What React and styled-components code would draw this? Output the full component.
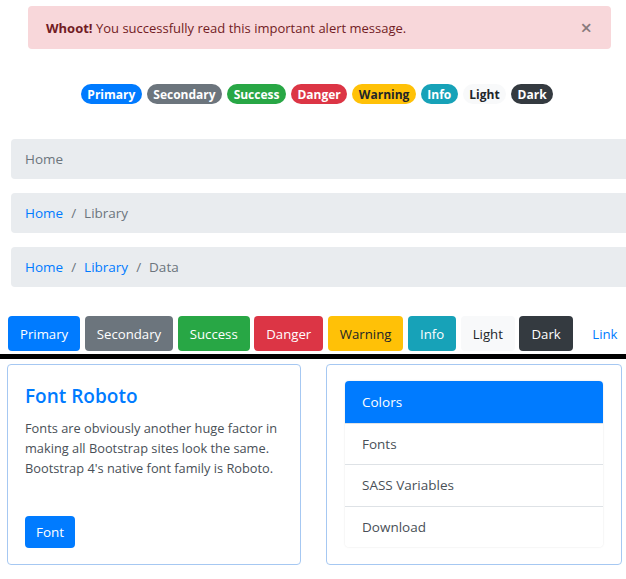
import React from 'react';
import styled, { createGlobalStyle } from 'styled-components';

const GlobalStyle = createGlobalStyle`
  body {
    margin: 0;
    background: #fff;
    font-family: 'Open Sans', 'Noto Sans', sans-serif;
    overflow-x: hidden;
  }
`;

const colors = {
  primary: { bg: '#007bff', fg: '#fff' },
  secondary: { bg: '#6c757d', fg: '#fff' },
  success: { bg: '#28a745', fg: '#fff' },
  danger: { bg: '#dc3545', fg: '#fff' },
  warning: { bg: '#ffc107', fg: '#212529' },
  info: { bg: '#17a2b8', fg: '#fff' },
  light: { bg: '#f8f9fa', fg: '#212529' },
  dark: { bg: '#343a40', fg: '#fff' },
};

const variants = ['primary', 'secondary', 'success', 'danger', 'warning', 'info', 'light', 'dark'];
const label = v => v[0].toUpperCase() + v.slice(1);

const Page = styled.div`
  width: 626px;
  padding-top: 6px;
`;

const Alert = styled.div`
  margin: 0 15px 0 28px;
  height: 43px;
  box-sizing: border-box;
  padding: 0 19px 0 18px;
  display: flex;
  align-items: center;
  justify-content: space-between;
  background: #f8d7da;
  color: #721c24;
  border-radius: 4px;
  font-size: 13px;
  strong {
    font-weight: 700;
  }
`;

const Close = styled.span`
  font-size: 20px;
  font-weight: 600;
  color: #8a7a7c;
  line-height: 1;
`;

const BadgeRow = styled.div`
  margin-top: 35px;
  display: flex;
  justify-content: center;
  gap: 5px;
  padding-left: 8px;
`;

const Badge = styled.span`
  height: 20px;
  padding: 0 6.5px;
  border-radius: 10px;
  display: inline-flex;
  align-items: center;
  font-size: 12px;
  font-weight: 700;
  background: ${p => colors[p.$v].bg};
  color: ${p => colors[p.$v].fg};
`;

const Crumbs = styled.nav`
  margin: 35px -20px 0 11px;
  display: flex;
  flex-direction: column;
  gap: 14px;
`;

const Crumb = styled.ol`
  margin: 0;
  list-style: none;
  height: 40px;
  box-sizing: border-box;
  padding: 0 14px;
  display: flex;
  align-items: center;
  background: #e9ecef;
  border-radius: 4px;
  font-size: 13.5px;
  color: #6c757d;
`;

const CrumbItem = styled.li`
  color: ${p => (p.$link ? '#007bff' : '#6c757d')};
  &:not(:first-child)::before {
    content: '/';
    color: #6c757d;
    padding: 0 8px;
  }
`;

const ButtonRow = styled.div`
  margin: 29px 0 0 8px;
  display: flex;
  gap: 4.6px;
`;

const Button = styled.button`
  height: 35px;
  padding: 0 ${p => (p.$v === 'link' ? 15 : 12)}px;
  border: none;
  border-radius: 4px;
  font-family: inherit;
  font-size: 13.2px;
  background: ${p => (p.$v === 'link' ? 'transparent' : colors[p.$v].bg)};
  color: ${p => (p.$v === 'link' ? '#007bff' : colors[p.$v].fg)};
`;

const Bar = styled.div`
  margin-top: 3px;
  height: 5px;
  background: #000;
`;

const CardRow = styled.div`
  margin: 5px 4px 0 7px;
  display: flex;
  gap: 25px;
`;

const Card = styled.div`
  flex: 1;
  height: 201px;
  box-sizing: border-box;
  border: 1px solid #a6c8f2;
  border-radius: 4px;
  padding: ${p => p.$pad};
`;

const Title = styled.h2`
  margin: 0 0 10px;
  font-size: 19px;
  line-height: 24px;
  font-weight: 600;
  color: #007bff;
`;

const Text = styled.p`
  margin: 0;
  font-size: 12.8px;
  line-height: 20px;
  color: #495057;
`;

const FontButton = styled.button`
  margin-top: 38px;
  height: 32px;
  padding: 0 11px;
  border: none;
  border-radius: 4px;
  background: #007bff;
  color: #fff;
  font-family: inherit;
  font-size: 13.5px;
`;

const ListGroup = styled.ul`
  margin: 0;
  padding: 0;
  list-style: none;
  border-radius: 4px;
  overflow: hidden;
  box-shadow: 0 0 2px rgba(0, 0, 0, 0.12);
`;

const ListItem = styled.li`
  height: 41.5px;
  box-sizing: border-box;
  padding: 0 17px;
  display: flex;
  align-items: center;
  font-size: 13.5px;
  background: ${p => (p.$active ? '#007bff' : '#fff')};
  color: ${p => (p.$active ? '#fff' : '#495057')};
  border-top: 1px solid ${p => (p.$active ? '#007bff' : '#dee2e6')};
  &:first-child {
    border-top: none;
  }
`;

export default function App() {
  return (
    <Page>
      <GlobalStyle />
      <Alert>
        <span>
          <strong>Whoot!</strong> You successfully read this important alert message.
        </span>
        <Close>×</Close>
      </Alert>

      <BadgeRow>
        {variants.map(v => (
          <Badge key={v} $v={v}>
            {label(v)}
          </Badge>
        ))}
      </BadgeRow>

      <Crumbs>
        <Crumb>
          <CrumbItem>Home</CrumbItem>
        </Crumb>
        <Crumb>
          <CrumbItem $link>Home</CrumbItem>
          <CrumbItem>Library</CrumbItem>
        </Crumb>
        <Crumb>
          <CrumbItem $link>Home</CrumbItem>
          <CrumbItem $link>Library</CrumbItem>
          <CrumbItem>Data</CrumbItem>
        </Crumb>
      </Crumbs>

      <ButtonRow>
        {variants.map(v => (
          <Button key={v} $v={v}>
            {label(v)}
          </Button>
        ))}
        <Button $v="link">Link</Button>
      </ButtonRow>

      <Bar />

      <CardRow>
        <Card $pad="19px 17px 18px 17px">
          <Title>Font Roboto</Title>
          <Text>
            Fonts are obviously another huge factor in making all Bootstrap sites look the same.
            Bootstrap 4's native font family is Roboto.
          </Text>
          <FontButton>Font</FontButton>
        </Card>
        <Card $pad="16px 18px 18px 18px">
          <ListGroup>
            <ListItem $active>Colors</ListItem>
            <ListItem>Fonts</ListItem>
            <ListItem>SASS Variables</ListItem>
            <ListItem>Download</ListItem>
          </ListGroup>
        </Card>
      </CardRow>
    </Page>
  );
}
